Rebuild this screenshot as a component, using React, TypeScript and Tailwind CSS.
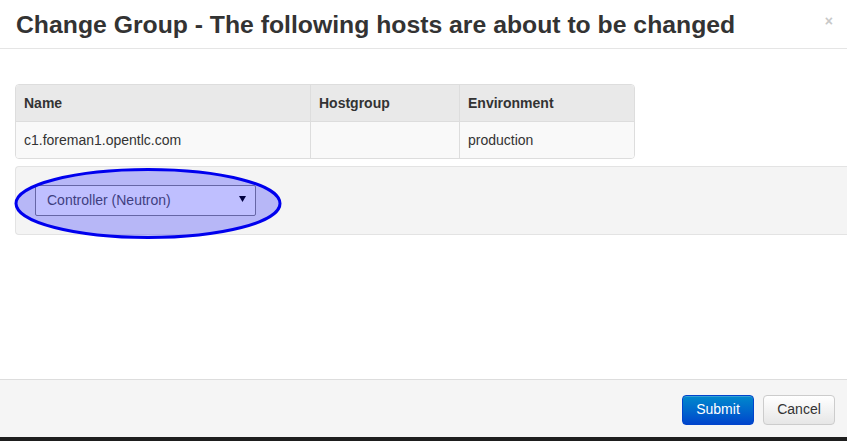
import React from "react";

export default function App() {
  return (
    <div
      className="relative w-[847px] h-[441px] overflow-hidden bg-white text-[14px] text-[#333]"
      style={{ fontFamily: '"Liberation Sans", Arial, sans-serif' }}
    >
      <div className="flex flex-col h-[437px]">
        {/* Header */}
        <div className="h-[49px] border-b border-[#e5e5e5] flex items-center justify-between pl-[16px] pr-[14px] shrink-0">
          <h3 className="text-[24.75px] font-bold leading-[30px] text-[#333] mt-[1px]">
            Change Group - The following hosts are about to be changed
          </h3>
          <span className="text-[#c8c8c8] text-[14px] font-bold leading-none mt-[-6px]">×</span>
        </div>

        {/* Body */}
        <div className="flex-1 pt-[35px] pl-[15px]">
          <div className="w-[620px] border border-[#dddddd] rounded-[4px] overflow-hidden">
            <div className="grid grid-cols-[294px_149px_1fr] bg-[#e9e9e9] h-[37px] border-b border-[#dddddd] font-bold">
              <div className="px-[8px] flex items-center">Name</div>
              <div className="px-[8px] flex items-center border-l border-[#dddddd]">Hostgroup</div>
              <div className="px-[8px] flex items-center border-l border-[#dddddd]">Environment</div>
            </div>
            <div className="grid grid-cols-[294px_149px_1fr] bg-[#f9f9f9] h-[36px]">
              <div className="px-[8px] flex items-center">c1.foreman1.opentlc.com</div>
              <div className="px-[8px] flex items-center border-l border-[#dddddd]"></div>
              <div className="px-[8px] flex items-center border-l border-[#dddddd]">production</div>
            </div>
          </div>

          <div className="relative mt-[7px] h-[69px] bg-[#f4f4f4] border border-[#e3e3e3] border-r-0 rounded-l-[4px] pl-[19px] pt-[18px]">
            <div className="w-[221px] h-[31px] bg-white border border-[#888] rounded-[2px] flex items-center justify-between pl-[11px] pr-[9px] text-[#555]">
              <span>Controller (Neutron)</span>
              <svg width="7" height="6" viewBox="0 0 7 6" className="mt-[-3px]">
                <path d="M0 0 L7 0 L3.5 6 Z" fill="#000" />
              </svg>
            </div>
            {/* highlight ellipse */}
            <svg
              className="absolute left-[-2px] top-[1px]"
              width="270"
              height="74"
              viewBox="0 0 270 74"
            >
              <ellipse
                cx="134"
                cy="35.5"
                rx="132"
                ry="34"
                fill="rgba(0,0,255,0.25)"
                stroke="#0000ee"
                strokeWidth="3"
              />
            </svg>
          </div>
        </div>

        {/* Footer */}
        <div className="h-[58px] bg-[#f5f5f5] border-t border-[#dddddd] flex items-center justify-end gap-[9px] pr-[12px] pt-[2px] shrink-0">
          <button className="w-[72px] h-[30px] rounded-[4px] text-white border border-[#0044cc] bg-gradient-to-b from-[#0088cc] to-[#0044cc] shadow-[inset_0_1px_0_rgba(255,255,255,0.2)]">
            Submit
          </button>
          <button className="w-[72px] h-[30px] rounded-[4px] text-[#333] border border-[#cccccc] bg-gradient-to-b from-white to-[#e6e6e6] shadow-[inset_0_1px_0_rgba(255,255,255,0.2)]">
            Cancel
          </button>
        </div>
      </div>
      <div className="h-[4px] bg-[#1e1e1e]"></div>
    </div>
  );
}
